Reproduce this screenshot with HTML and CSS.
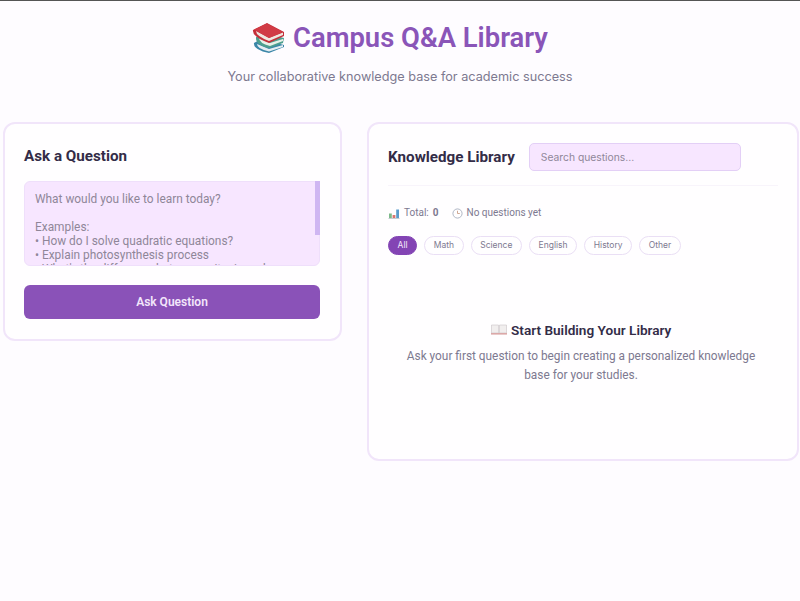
FILE: index.html
```html
<!DOCTYPE html>
<html lang="en">
  <head>
    <meta charset="UTF-8" />
    <title>Campus Q&amp;A Library</title>
    <link rel="stylesheet" href="styles.css">
  </head>
  <body>
    <header class="page-header">
      <h1>
        <svg class="books-icon" width="34" height="30" viewBox="0 0 34 30">
          <!-- bottom book -->
          <path d="M2 20 L9 16 L32 22 L32 24 L17 30 Q1 27 2 20Z" fill="#3b86a8"/>
          <path d="M5 21 L17 26 L31 22 L31 24 L17 28.5 Q5 26 5 21Z" fill="#e6eef2"/>
          <!-- middle book -->
          <path d="M4 14 L12 10 L32 15 L31 20 L17 25 Q3 22 4 14Z" fill="#4e9f8e"/>
          <path d="M7 15 L18 20 L31 16 L31 18 L18 23 Q7 20 7 15Z" fill="#e8f0e8"/>
          <!-- top book -->
          <path d="M1 7 L15 0 L32 9 L32 13 L17 20 Q0 14 1 7Z" fill="#c42f3a"/>
          <path d="M4 8 L17 15 L31 9.5 L31 12 L17 18 Q4 13 4 8Z" fill="#efe6df"/>
          <path d="M2 6.5 L15 0.5 L31 9 L17 15Z" fill="#d13a45"/>
        </svg>
        <span>Campus Q&amp;A Library</span>
      </h1>
      <p class="tagline">Your collaborative knowledge base for academic success</p>
    </header>

    <main class="layout">
      <section class="card ask-card">
        <h2>Ask a Question</h2>
        <div class="question-wrap">
          <textarea class="question-box" readonly>What would you like to learn today?

Examples:
• How do I solve quadratic equations?
• Explain photosynthesis process
• What's the difference between mitosis and meiosis?
• When did the Roman Empire fall?</textarea>
          <span class="scroll-thumb"></span>
        </div>
        <button class="ask-btn">Ask Question</button>
      </section>

      <section class="card library-card">
        <div class="library-head">
          <h2>Knowledge Library</h2>
          <input class="search" type="text" placeholder="Search questions..." />
        </div>

        <div class="stats">
          <span class="stat">
            <svg width="12" height="12" viewBox="0 0 12 12">
              <rect x="0.5" y="11" width="11" height="1" fill="#c5ccd2"/>
              <rect x="1" y="6.5" width="2.8" height="4.5" fill="#7db98a"/>
              <rect x="4.6" y="8" width="2.8" height="3" fill="#d9756f"/>
              <rect x="8.2" y="2.5" width="2.8" height="8.5" fill="#5a9ccc"/>
            </svg>
            Total: <b>0</b>
          </span>
          <span class="stat">
            <svg width="11" height="11" viewBox="0 0 12 12" fill="none" stroke="#a9b0c0">
              <circle cx="6" cy="6" r="5"/>
              <path d="M6 3 V6 H8.5" stroke="#c9a08a"/>
            </svg>
            No questions yet
          </span>
        </div>

        <div class="filters">
          <span class="chip active">All</span>
          <span class="chip">Math</span>
          <span class="chip">Science</span>
          <span class="chip">English</span>
          <span class="chip">History</span>
          <span class="chip">Other</span>
        </div>

        <div class="empty">
          <h3>
            <svg class="book-open" width="16" height="11" viewBox="0 0 16 11">
              <path d="M0.5 1 H7.5 V9 H0.5Z M8.5 1 H15.5 V9 H8.5Z" fill="#f1eeee" stroke="#c9c3c6" stroke-width="0.6"/>
              <rect x="0" y="9" width="16" height="1.6" fill="#dba8a8"/>
            </svg>
            Start Building Your Library
          </h3>
          <p>Ask your first question to begin creating a personalized knowledge base for your studies.</p>
        </div>
      </section>
    </main>
  </body>
</html>
```

FILE: styles.css
```css
* {
  box-sizing: border-box;
}
body {
  margin: 0;
  height: 601px;
  overflow: hidden;
  font-family: Roboto, sans-serif;
  background-color: #fefcff;
  border-top: 1px solid #555;
  color: #2d2640;
}
.page-header {
  text-align: center;
  padding-top: 19px;
}
.page-header h1 {
  margin: 0;
  display: flex;
  justify-content: center;
  align-items: center;
  gap: 7px;
  font-size: 27.4px;
  line-height: 36px;
  font-weight: 600;
  color: #8a55b8;
}
.tagline {
  margin: 12px 0 0;
  font-family: Inter, sans-serif;
  font-size: 12.7px;
  line-height: 18px;
  color: #7d7990;
}
.layout {
  display: grid;
  grid-template-columns: 339px 432px;
  gap: 25px;
  align-items: start;
  padding: 36px 2px 0 3px;
}
.card {
  background-color: #fffeff;
  border: 2px solid #f1e5fa;
  border-radius: 12px;
}
.ask-card {
  height: 219px;
  padding: 20px 20px 0 19px;
}
.card h2 {
  margin: 0;
  font-size: 15.2px;
  line-height: 24px;
  font-weight: 700;
  color: #332c47;
}
.question-wrap {
  position: relative;
  margin-top: 13px;
}
.question-box {
  display: block;
  width: 100%;
  height: 85px;
  padding: 9.5px 10px 0;
  border: 1px solid #efdffb;
  border-radius: 6px;
  background-color: #f7e6ff;
  font-family: Roboto, sans-serif;
  font-size: 11.9px;
  line-height: 14.1px;
  color: #8f8699;
  resize: none;
  outline: none;
  overflow: hidden;
}
.scroll-thumb {
  position: absolute;
  top: 0;
  right: 0;
  width: 5px;
  height: 54px;
  background-color: #cfb6f2;
}
.ask-btn {
  display: block;
  width: 100%;
  height: 34px;
  margin-top: 19px;
  border: none;
  border-radius: 6px;
  background-color: #8a52b8;
  color: #f3e6fb;
  font-family: Roboto, sans-serif;
  font-size: 12px;
  font-weight: 600;
}
.library-card {
  height: 339px;
  padding: 19px 19px 0;
}
.library-head {
  display: flex;
  align-items: center;
  gap: 14px;
  padding-bottom: 14px;
  border-bottom: 1px solid #f8f4fb;
}
.search {
  width: 212px;
  height: 28px;
  padding: 0 11px;
  border: 1px solid #e3cff6;
  border-radius: 5px;
  background-color: #f7e6ff;
  font-family: Inter, sans-serif;
  font-size: 10.3px;
  outline: none;
}
.search::placeholder {
  color: #8f8699;
}
.stats {
  display: flex;
  gap: 13px;
  margin-top: 20px;
  font-size: 10px;
  line-height: 14px;
  color: #7d7990;
}
.stat {
  display: flex;
  align-items: center;
  gap: 4px;
}
.filters {
  display: flex;
  gap: 7px;
  margin-top: 16px;
}
.chip {
  padding: 0 8.6px;
  height: 19px;
  line-height: 17px;
  border: 1px solid #eadff5;
  border-radius: 10px;
  background-color: #fffeff;
  font-family: Inter, sans-serif;
  font-size: 8.5px;
  color: #7d7990;
}
.chip.active {
  background-color: #8344b4;
  border-color: #8344b4;
  color: #f3e6fb;
}
.empty {
  margin-top: 66px;
  padding: 0 20px 0 16px;
  text-align: center;
}
.empty h3 {
  margin: 0;
  font-size: 13.6px;
  line-height: 18px;
  font-weight: 600;
  color: #332c47;
}
.book-open {
  margin-right: 1px;
}
.empty p {
  margin: 8px 0 0;
  font-size: 11.85px;
  line-height: 19px;
  color: #7d7990;
}
```
